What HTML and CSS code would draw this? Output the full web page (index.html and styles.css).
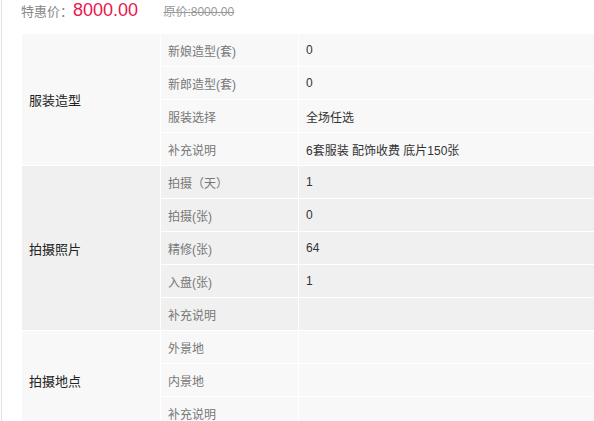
FILE: index.html
```html
<!DOCTYPE html>
<html lang="zh-CN">
<head>
  <meta charset="UTF-8">
  <title>套系详情</title>
  <link rel="stylesheet" href="styles.css">
</head>
<body>
  <div class="page">
    <!-- 价格 -->
    <div class="price">
      <span class="price-label">特惠价：</span><span class="price-now">8000.00</span>
      <span class="price-old">原价:8000.00</span>
    </div>

    <!-- 套系明细 -->
    <table class="detail">
      <colgroup>
        <col class="col-group">
        <col class="col-name">
        <col>
      </colgroup>
      <tbody class="light">
        <tr><td class="group" rowspan="4">服装造型</td><td class="name">新娘造型(套)</td><td>0</td></tr>
        <tr><td class="name">新郎造型(套)</td><td>0</td></tr>
        <tr><td class="name">服装选择</td><td>全场任选</td></tr>
        <tr><td class="name">补充说明</td><td>6套服装 配饰收费 底片150张</td></tr>
      </tbody>
      <tbody class="dark">
        <tr><td class="group" rowspan="5">拍摄照片</td><td class="name">拍摄（天）</td><td>1</td></tr>
        <tr><td class="name">拍摄(张)</td><td>0</td></tr>
        <tr><td class="name">精修(张)</td><td>64</td></tr>
        <tr><td class="name">入盘(张)</td><td>1</td></tr>
        <tr><td class="name">补充说明</td><td></td></tr>
      </tbody>
      <tbody class="light">
        <tr><td class="group" rowspan="3">拍摄地点</td><td class="name">外景地</td><td></td></tr>
        <tr><td class="name">内景地</td><td></td></tr>
        <tr><td class="name">补充说明</td><td></td></tr>
      </tbody>
    </table>
  </div>
</body>
</html>
```

FILE: styles.css
```css
* {
  margin: 0;
  padding: 0;
  box-sizing: border-box;
}

html, body {
  height: 100%;
  overflow: hidden;
  background: #fff;
}

body {
  font-family: "Liberation Sans", "Noto Sans CJK SC", sans-serif;
  font-size: 12px;
  color: #333;
}

.page {
  height: 100%;
  margin-left: 1px;
  border-left: 1px solid #e2e2e2;
  padding-left: 19px;
}

/* 价格 */
.price {
  height: 20px;
  line-height: 20px;
  white-space: nowrap;
}

.price-label {
  font-size: 13px;
  color: #888;
}

.price-now {
  font-size: 18px;
  color: #e8174f;
  margin-right: 22px;
}

.price-old {
  font-size: 12px;
  color: #999;
  text-decoration: line-through;
}

/* 明细表 */
.detail {
  width: 580px;
  margin-top: 13px;
  border-collapse: separate;
  border-spacing: 1px;
  table-layout: fixed;
}

.col-group {
  width: 138px;
}

.col-name {
  width: 137px;
}

.detail td {
  height: 32px;
  padding: 0 7px;
  vertical-align: middle;
  white-space: nowrap;
}

.detail .name {
  color: #777;
}

.detail .group {
  color: #222;
  font-size: 13px;
}

.light td {
  background: #f8f8f8;
}

.dark td {
  background: #f0f0f0;
}
```
